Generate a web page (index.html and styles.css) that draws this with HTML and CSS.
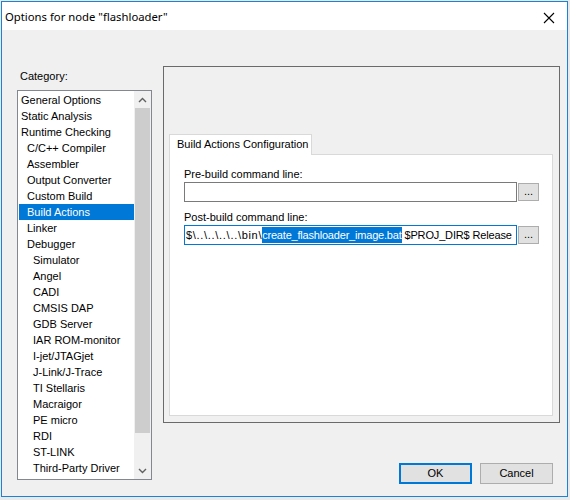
FILE: index.html
```html
<!DOCTYPE html>
<html>
<head>
<meta charset="utf-8">
<link rel="stylesheet" href="styles.css">
</head>
<body>
<div class="window">
  <div class="titlebar">
    <span class="title">Options for node "flashloader"</span>
    <svg class="close" width="12" height="12" viewBox="0 0 12 12"><path d="M1 1 L11 11 M11 1 L1 11" stroke="#000" stroke-width="1.1" fill="none"/></svg>
  </div>
  <div class="client">
    <div class="left">
      <div class="cat-label">Category:</div>
      <div class="listbox">
        <ul class="items">
          <li class="l0">General Options</li>
          <li class="l0">Static Analysis</li>
          <li class="l0">Runtime Checking</li>
          <li class="l1">C/C++ Compiler</li>
          <li class="l1">Assembler</li>
          <li class="l1">Output Converter</li>
          <li class="l1">Custom Build</li>
          <li class="l1 sel">Build Actions</li>
          <li class="l1">Linker</li>
          <li class="l1">Debugger</li>
          <li class="l2">Simulator</li>
          <li class="l2">Angel</li>
          <li class="l2">CADI</li>
          <li class="l2">CMSIS DAP</li>
          <li class="l2">GDB Server</li>
          <li class="l2">IAR ROM-monitor</li>
          <li class="l2">I-jet/JTAGjet</li>
          <li class="l2">J-Link/J-Trace</li>
          <li class="l2">TI Stellaris</li>
          <li class="l2">Macraigor</li>
          <li class="l2">PE micro</li>
          <li class="l2">RDI</li>
          <li class="l2">ST-LINK</li>
          <li class="l2">Third-Party Driver</li>
        </ul>
        <div class="vscroll">
          <div class="arrow"><svg width="9" height="6" viewBox="0 0 9 6"><path d="M1 5 L4.5 1.5 L8 5" stroke="#606060" stroke-width="1.4" fill="none"/></svg></div>
          <div class="track"><div class="thumb"></div></div>
          <div class="arrow"><svg width="9" height="6" viewBox="0 0 9 6"><path d="M1 1 L4.5 4.5 L8 1" stroke="#606060" stroke-width="1.4" fill="none"/></svg></div>
        </div>
      </div>
    </div>
    <div class="right">
      <div class="groupbox">
        <div class="tabs"><div class="tab">Build Actions Configuration</div></div>
        <div class="panel">
          <div class="field-label">Pre-build command line:</div>
          <div class="field-row">
            <div class="input"></div>
            <div class="browse">...</div>
          </div>
          <div class="field-label second">Post-build command line:</div>
          <div class="field-row">
            <div class="input focus"><span class="pre">$\..\..\..\..\bin\</span><span class="hl">create_flashloader_image.bat</span><span class="post"> $PROJ_DIR$ Release</span></div>
            <div class="browse">...</div>
          </div>
        </div>
      </div>
      <div class="buttons">
        <div class="btn default">OK</div>
        <div class="btn">Cancel</div>
      </div>
    </div>
  </div>
</div>
</body>
</html>
```

FILE: styles.css
```css
* { box-sizing: border-box; }
html, body { margin: 0; padding: 0; }
body {
  background: #e9e9e9;
  width: 570px;
  height: 500px;
  overflow: hidden;
  font-family: "Liberation Sans", Arial, sans-serif;
  font-size: 11px;
  color: #000;
}
.window {
  margin: 1px 0 0 1px;
  width: 567px;
  height: 496px;
  border: 1px solid #1883d7;
  background: #f0f0f0;
  display: flex;
  flex-direction: column;
}
.titlebar {
  height: 28px;
  background: #fff;
  display: flex;
  align-items: center;
  justify-content: space-between;
  padding: 0 12px 0 3px;
  flex: none;
}
.title {
  font-family: "Noto Sans", "Open Sans", sans-serif;
  font-size: 11.3px;
  line-height: 16px;
  color: #000;
  position: relative;
  top: 1px;
}
.close { display: block; position: relative; top: 2px; }
.client {
  flex: 1;
  display: flex;
  align-items: flex-start;
}
.left {
  margin-left: 15px;
  width: 135px;
  padding-top: 39px;
}
.cat-label {
  height: 14px;
  line-height: 14px;
  padding-left: 3px;
  margin-bottom: 7px;
}
.listbox {
  height: 390px;
  border: 1px solid #828790;
  background: #fff;
  display: flex;
}
.items {
  list-style: none;
  margin: 0;
  padding: 1px 0 0 1px;
  flex: 1;
}
.items li {
  height: 16px;
  line-height: 16px;
  white-space: nowrap;
}
.items .l0 { padding-left: 2px; }
.items .l1 { padding-left: 8px; }
.items .l2 { padding-left: 14px; }
.items .sel { background: #0078d7; color: #fff; }
.vscroll {
  width: 17px;
  background: #f0f0f0;
  display: flex;
  flex-direction: column;
}
.arrow {
  height: 17px;
  display: flex;
  align-items: center;
  justify-content: center;
}
.arrow svg { display: block; }
.track { flex: 1; padding: 0 1px; }
.thumb { height: 325px; background: #cdcdcd; }
.right {
  margin-left: 11px;
  margin-top: 36px;
  width: 397px;
}
.groupbox {
  height: 357px;
  border: 1px solid #6a6a6a;
  padding: 67px 6px 6px 5px;
  display: flex;
  flex-direction: column;
}
.tabs { display: flex; position: relative; z-index: 1; }
.tab {
  height: 21px;
  width: 143px;
  border: 1px solid #d9d9d9;
  border-bottom: none;
  background: #fff;
  line-height: 19px;
  padding-left: 7px;
  margin-bottom: -1px;
  white-space: nowrap;
}
.panel {
  flex: 1;
  border: 1px solid #d9d9d9;
  background: #fff;
  padding: 12px 0 0 14px;
}
.field-label {
  height: 14px;
  line-height: 14px;
  margin-bottom: 1px;
}
.field-label.second { margin-top: 8px; }
.field-row { display: flex; align-items: flex-start; }
.input {
  width: 333px;
  height: 20px;
  border: 1px solid #7a7a7a;
  background: #fff;
  padding: 1px 0 0 1px;
  line-height: 16px;
  white-space: nowrap;
  overflow: hidden;
}
.input.focus { border-color: #0078d7; }
.pre { letter-spacing: 0.7px; }
.post { letter-spacing: -0.15px; }
.hl { background: #0078d7; color: #fff; display: inline-block; height: 16px; letter-spacing: -0.2px; }
.browse {
  width: 21px;
  height: 18px;
  margin-left: 1px;
  margin-top: 1px;
  border: 1px solid #adadad;
  background: #e1e1e1;
  text-align: center;
  line-height: 14px;
}
.buttons {
  display: flex;
  justify-content: flex-end;
  gap: 8px;
  padding-right: 7px;
  margin-top: 40px;
}
.btn {
  width: 73px;
  height: 21px;
  border: 1px solid #adadad;
  background: #e1e1e1;
  text-align: center;
  line-height: 19px;
}
.btn.default { border: 2px solid #0078d7; line-height: 17px; }
```
